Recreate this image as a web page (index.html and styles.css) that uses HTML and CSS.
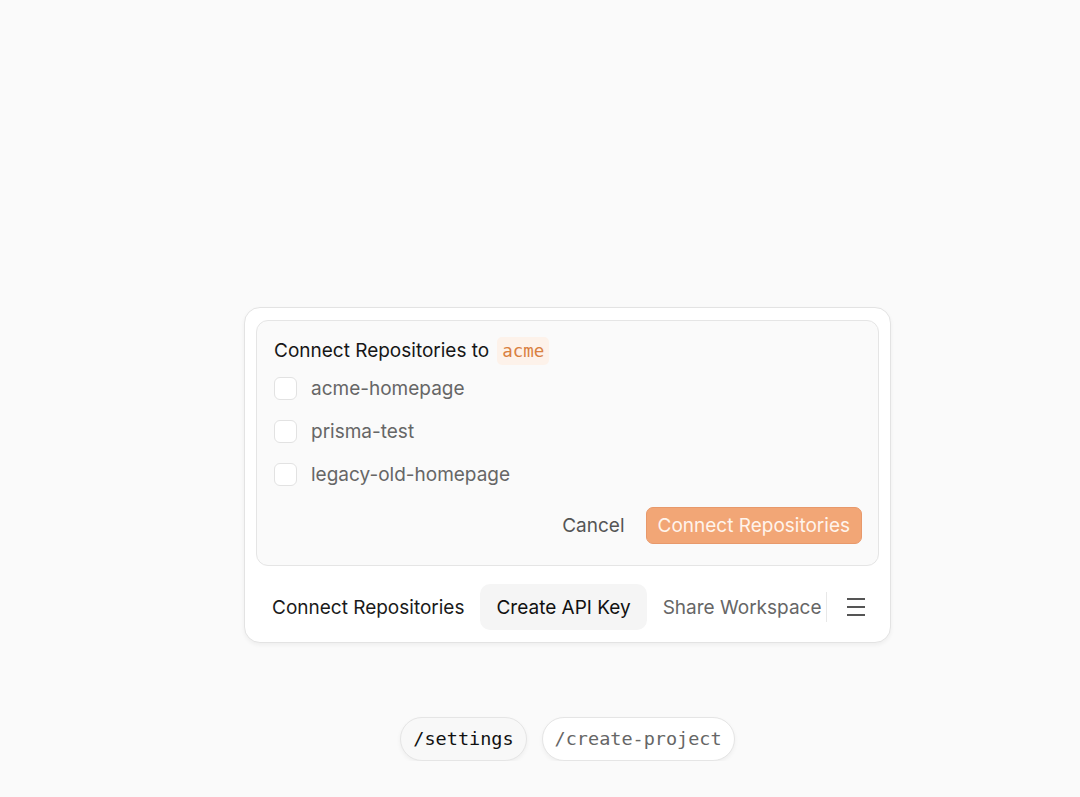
FILE: index.html
```html
<!DOCTYPE html>
<html lang="en">
<head>
    <meta charset="UTF-8">
    <meta name="viewport" content="width=device-width, initial-scale=1.0">
    <title>Connect Repositories</title>
    <link rel="stylesheet" href="styles.css">
</head>
<body>
    <div class="stage">
        <div class="card">
            <!-- Connect repositories panel -->
            <div class="panel">
                <div class="panel-title">Connect Repositories to <code class="org">acme</code></div>
                <label class="repo"><span class="check"></span>acme-homepage</label>
                <label class="repo"><span class="check"></span>prisma-test</label>
                <label class="repo"><span class="check"></span>legacy-old-homepage</label>
                <div class="panel-actions">
                    <button class="btn-cancel">Cancel</button>
                    <button class="btn-connect">Connect Repositories</button>
                </div>
            </div>

            <!-- Toolbar -->
            <div class="toolbar">
                <button class="tool tool-strong">Connect Repositories</button>
                <button class="tool tool-active">Create API Key</button>
                <button class="tool tool-muted">Share Workspace</button>
                <span class="divider"></span>
                <button class="tool-menu" aria-label="Menu">
                    <svg width="20" height="18" viewBox="0 0 20 18">
                        <path d="M1 1h18M1 9h18M1 17h18" stroke="#555" stroke-width="2" fill="none"/>
                    </svg>
                </button>
            </div>
        </div>

        <div class="routes">
            <span class="route route-current">/settings</span>
            <span class="route">/create-project</span>
        </div>
    </div>
</body>
</html>
```

FILE: styles.css
```css
body {
    margin: 0;
    background-color: #fafafa;
    font-family: 'Inter', 'Noto Sans', sans-serif;
    color: #1a1a1a;
}
.stage {
    display: flex;
    flex-direction: column;
    align-items: center;
    padding: 307px 0 0 55px;
}
.card {
    width: 623px;
    padding: 12px 11px 12px;
    background: #ffffff;
    border: 1px solid #e3e3e3;
    border-radius: 16px;
    box-shadow: 0 2px 4px rgba(0, 0, 0, 0.05);
}
.panel {
    background: #fafafa;
    border: 1px solid #e5e5e5;
    border-radius: 12px;
    padding: 13px 16px 20px 17px;
}
.panel-title {
    display: flex;
    align-items: center;
    gap: 8px;
    font-size: 19px;
    height: 33px;
    color: #161616;
}
.org {
    font-family: 'DejaVu Sans Mono', monospace;
    font-size: 17.5px;
    color: #d9803f;
    background: #fdf2ea;
    border-radius: 5px;
    padding: 4px 5px;
}
.repo {
    display: flex;
    align-items: center;
    gap: 14px;
    height: 43px;
    font-size: 19px;
    color: #666666;
}
.check {
    width: 21px;
    height: 21px;
    background: #ffffff;
    border: 1px solid #e2e2e2;
    border-radius: 6px;
}
.panel-actions {
    display: flex;
    justify-content: flex-end;
    align-items: center;
    gap: 9px;
    margin-top: 10px;
}
button {
    font-family: inherit;
    font-size: 19px;
    border: none;
    background: none;
    cursor: pointer;
}
.btn-cancel {
    color: #555555;
    padding: 8px 12px;
}
.btn-connect {
    height: 37px;
    padding: 0 11px;
    color: #fff4ec;
    background: #f2a676;
    border: 1px solid #e8996b;
    border-radius: 7px;
}
.toolbar {
    display: flex;
    align-items: center;
    margin-top: 18px;
}
.tool {
    height: 46px;
    padding: 0 16px;
    border-radius: 10px;
}
.tool-strong {
    color: #1a1a1a;
}
.tool-active {
    color: #111111;
    background: #f5f5f5;
}
.tool-muted {
    color: #666666;
    padding-right: 4px;
}
.divider {
    width: 1px;
    height: 30px;
    background: #e8e8e8;
}
.tool-menu {
    display: flex;
    align-items: center;
    justify-content: center;
    width: 40px;
    height: 46px;
    margin-left: 9px;
    padding: 0;
}
.routes {
    display: flex;
    gap: 15px;
    margin-top: 74px;
}
.route {
    font-family: 'DejaVu Sans Mono', monospace;
    font-size: 18.5px;
    color: #666666;
    height: 42px;
    line-height: 42px;
    padding: 0 12px;
    background: #ffffff;
    border: 1px solid #e5e5e5;
    border-radius: 22px;
    box-shadow: 0 2px 4px rgba(0, 0, 0, 0.05);
}
.route-current {
    color: #111111;
    background: #f8f8f8;
}
```
